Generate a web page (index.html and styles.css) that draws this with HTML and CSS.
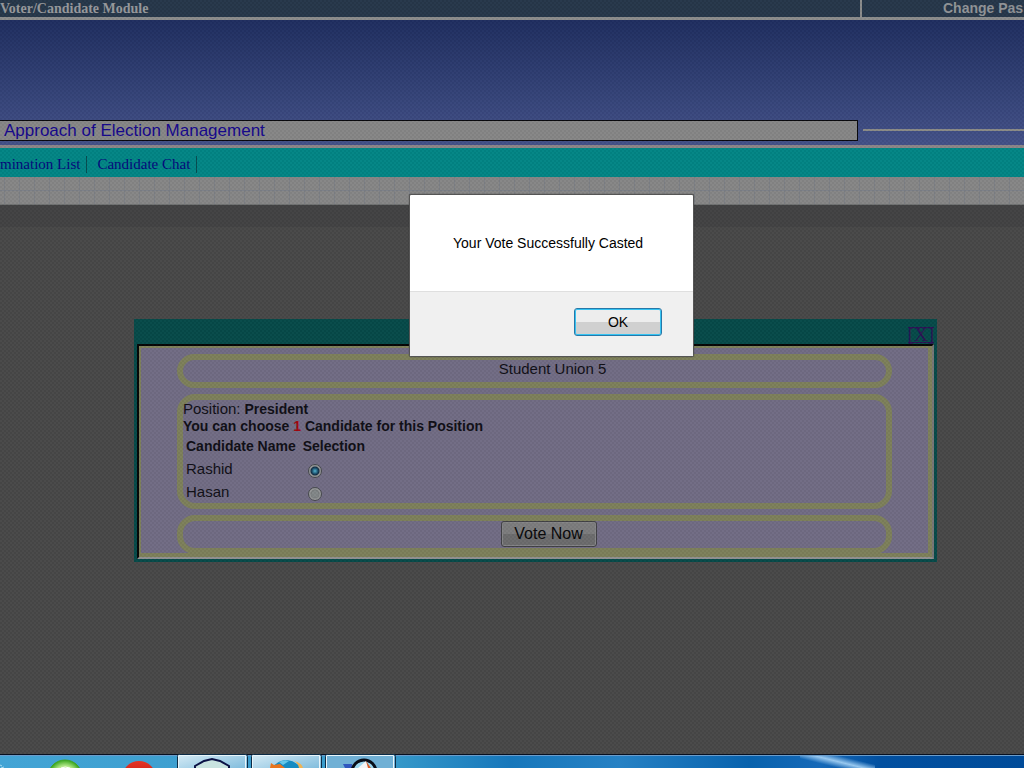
FILE: index.html
```html
<!DOCTYPE html>
<html lang="en">
<head>
<meta charset="utf-8">
<title>Election Management</title>
<link rel="stylesheet" href="styles.css">
</head>
<body>
<header>
  <div class="topbar">
    <strong class="module">Voter/Candidate Module</strong>
    <a class="password" href="#">Change Pas</a>
  </div>
  <div class="banner">
    <div class="slogan">Approach of Election Management</div>
    <div class="rule"></div>
  </div>
  <nav class="menu">
    <a class="first" href="#">mination List</a>
    <a href="#">Candidate Chat</a>
  </nav>
  <div class="grid"></div>
  <div class="shade"></div>
</header>
<main>
  <section class="panel">
    <div class="panel-head"><a href="#">[X]</a></div>
    <form class="panel-body">
      <div class="group title">Student Union 5</div>
      <div class="group ballot">
        <div><span class="plain">Position:</span> <b>President</b></div>
        <div><b>You can choose <span class="count">1</span> Candidate for this Position</b></div>
        <table>
          <thead><tr><th>Candidate Name</th><th>Selection</th></tr></thead>
          <tbody>
            <tr><td><label for="rashid">Rashid</label></td><td><input type="radio" name="vote" id="rashid" checked></td></tr>
            <tr><td><label for="hasan">Hasan</label></td><td><input type="radio" name="vote" id="hasan"></td></tr>
          </tbody>
        </table>
      </div>
      <div class="group submit"><button type="button">Vote Now</button></div>
    </form>
  </section>
</main>
<div class="veil"></div>
<div class="alert" role="alertdialog" aria-labelledby="message">
  <p id="message">Your Vote Successfully Casted</p>
  <div class="actions"><button type="button">OK</button></div>
</div>
<footer class="taskbar">
  <svg class="apps" width="400" height="14" viewBox="0 0 400 14" aria-hidden="true">
    <defs>
      <linearGradient id="tab" x2="1" y2="1"><stop offset="0" stop-color="#d6ebf5"/><stop offset="1" stop-color="#6fb3d8"/></linearGradient>
      <radialGradient id="green" cy="0.5"><stop offset="0" stop-color="#e9fbd0"/><stop offset="0.65" stop-color="#b4e88a"/><stop offset="1" stop-color="#36a51c"/></radialGradient>
      <linearGradient id="red" x2="0" y2="1"><stop offset="0" stop-color="#e63424"/><stop offset="1" stop-color="#a80b0b"/></linearGradient>
    </defs>
    <path d="M0 11l2 1M1 14l3-1" stroke="#a9dcf0"/>
    <circle cx="65" cy="23" r="17" fill="url(#green)" stroke="#43a622"/>
    <path d="M61 14q4-2 9 0" stroke="#fff" fill="none"/>
    <circle cx="139" cy="24" r="17" fill="url(#red)"/>
    <g stroke="#0c2c46">
      <rect x="177.500" y=".5" width="70" height="20" rx="2" fill="url(#tab)"/>
      <rect x="251.500" y=".5" width="70" height="20" rx="2" fill="url(#tab)"/>
      <rect x="325.500" y=".5" width="70" height="20" rx="2" fill="#70b0d5"/>
    </g>
    <g fill="none" stroke="#e9f5fa">
      <path d="M178.500 14V1.500h67V14M252.500 14V1.500h67V14M326.500 14V1.500h67V14"/>
    </g>
    <path d="M195 16V12L204 7l8-2 8 2 9 5v4z" fill="#c9e3e0" stroke="#0b1145" stroke-width="2"/>
    <path d="M272 14q6-8 15-8 9 1 14 8z" fill="#168bc2"/>
    <path d="M279 8q6-3 10-1l-6 4z" fill="#65c7e8"/>
    <path d="M270 14l1-5 3 2 6-1 5 4z" fill="#e8751e"/>
    <path d="M294 7q8 2 9 7h-4q-1-5-5-7z" fill="#f0b454"/>
    <path d="M343 10h9v4h-7z" fill="#3158bf"/>
    <circle cx="364" cy="18" r="12" fill="#9bd6ef" stroke="#080d18" stroke-width="3"/>
    <path d="M358 14l8-7 3 7z" fill="#f4f4f4"/>
    <path d="M366 7l5 7h-3z" fill="#d75c27"/>
  </svg>
</footer>
</body>
</html>
```
FILE: styles.css
```css
* { box-sizing: border-box; }
body {
  margin: 0;
  min-height: 100vh;
  display: flex;
  flex-direction: column;
  position: relative;
  overflow: hidden;
  background: #484848;
  color: #100f16;
  font: 14px/17px "Liberation Sans", Arial, sans-serif;
}
a { text-decoration: none; }
.topbar {
  display: flex;
  height: 20px;
  background: #26374a;
  border-bottom: 3px solid #8b8c8c;
  white-space: nowrap;
  color: #96989b;
}
.module {
  flex: 1;
  border-right: 2px solid #8b8c8c;
  font-family: "Liberation Serif", "Times New Roman", serif;
}
.password {
  width: 162px;
  padding-left: 81px;
  color: #909396;
  font-weight: bold;
}
.banner {
  height: 128px;
  display: flex;
  align-items: flex-end;
  gap: 5px;
  padding-bottom: 4px;
  background: linear-gradient(#1f2e60, #435188);
  border-bottom: 3px solid #8b8588;
}
.slogan {
  flex: 1;
  height: 21px;
  padding-left: 4px;
  background: #868686;
  border: 1px solid #08080c;
  border-left: 0;
  color: #15078c;
  font-size: 17px;
  line-height: 19px;
}
.rule {
  width: 161px;
  height: 2px;
  margin-bottom: 10px;
  background: #8b8b87;
}
.menu {
  display: flex;
  height: 29px;
  padding-top: 8px;
  background: #028585;
  font: 15px/17px "Liberation Serif", "Times New Roman", serif;
}
.menu a {
  height: 17px;
  margin-right: 10px;
  padding-right: 6px;
  border-right: 1px solid #064c50;
  color: #04087c;
  white-space: nowrap;
}
.menu .first { min-width: 84px; text-align: right; }
.grid {
  height: 28px;
  background:
    linear-gradient(#7b7f87, #7b7f87) 0 13px / 100% 1px no-repeat,
    repeating-linear-gradient(90deg, transparent 0 4px, #7c7f85 4px 5px, transparent 5px 15px),
    #868686;
  border-bottom: 1px solid #707272;
}
.shade { height: 22px; background: #424243; }
main { flex: 1; padding: 92px 87px 20px 134px; }
.panel {
  padding: 0 3px 3px;
  background: #064a49;
}
.panel-head {
  display: flex;
  justify-content: flex-end;
  height: 25px;
  padding-top: 8px;
}
.panel-head a {
  height: 16px;
  border: solid #2b1354;
  border-width: 1px 0;
  color: #2b1354;
  font: 19px/14px "Liberation Serif", "Times New Roman", serif;
}
.panel-body {
  display: flex;
  flex-direction: column;
  gap: 6px;
  padding: 8px 40px 3px 38px;
  background: #716c84;
  border: 2px solid;
  border-color: #050505 #777777 #909090 #050505;
  box-shadow: inset 2px 2px #7d805a, inset -4px -4px #7d805a;
}
.group {
  border: 6px solid #7d805a;
  border-radius: 18px;
}
.title {
  height: 34px;
  padding-left: 36px;
  text-align: center;
  font-size: 15px;
}
.ballot { height: 115px; }
.plain { font-size: 15px; }
.count { color: #a0050e; }
table { border-spacing: 2px; line-height: 17px; }
th, td { padding: 1px; text-align: left; height: 19px; }
th { white-space: nowrap; }
th + th { padding-left: 4px; }
td { height: 21px; font-size: 15px; }
td + td { padding-left: 9px; }
td input {
  appearance: none;
  display: block;
  width: 14px;
  height: 14px;
  margin: 4px 0 0;
  border: 1px solid #474a4d;
  border-radius: 50%;
  background: radial-gradient(circle, #828788 3px, #777b7c 4px, #959798 5px);
}
td input:checked {
  background: radial-gradient(circle at 50% 50%, #4398b5 0 1px, #174966 3px, #112b40 4px, #959798 5px);
}
.submit { height: 39px; padding-left: 28px; text-align: center; }
.submit button {
  width: 96px;
  height: 26px;
  padding: 0;
  border: 1px solid #404044;
  border-radius: 3px;
  background: linear-gradient(#7c7c7d 50%, #6c6c6d 50%);
  box-shadow: inset 0 0 0 1px #858587;
  color: #08080a;
  font: 16px/20px "Liberation Sans", Arial, sans-serif;
}
.veil {
  position: absolute;
  inset: 0;
  pointer-events: none;
  background: repeating-conic-gradient(#00000009 0 25%, #ffffff04 0 50%) 0 0 / 4px 4px;
}
.alert {
  position: absolute;
  top: 194px;
  left: 409px;
  width: 285px;
  border: 1px solid #555;
  border-radius: 2px;
  background: #fff;
  box-shadow: 0 0 1px #222;
  color: #000;
}
.alert p { margin: 0; padding: 40px 43px 39px; white-space: nowrap; }
.actions {
  display: flex;
  justify-content: flex-end;
  padding: 16px 31px 20px;
  border-top: 1px solid #dfdfdf;
  background: #f0f0f0;
}
.actions button {
  width: 88px;
  height: 28px;
  border: 1px solid #2778a8;
  border-radius: 3px;
  background: linear-gradient(#ededed 50%, #d0d0d0 50%);
  box-shadow: inset 0 0 0 1px #35c3f2;
  color: #000;
  font: 14px/17px "Liberation Sans", Arial, sans-serif;
}
.taskbar {
  position: relative;
  height: 14px;
  border-top: 1px solid #071020;
  box-shadow: inset 0 1px #6b9cca;
  background:
    linear-gradient(14deg, transparent 30%, #98c8ef 50%, transparent 70%) 800px 0 / 75px 100% no-repeat,
    linear-gradient(90deg, #43a4d5 0, #379aca 390px, #1777bb 510px, #2681c4 620px, #0862ad 750px, #1669b8 820px, #0250a0 880px, #004b99);
}
.apps { display: block; margin-top: -1px; }
```
